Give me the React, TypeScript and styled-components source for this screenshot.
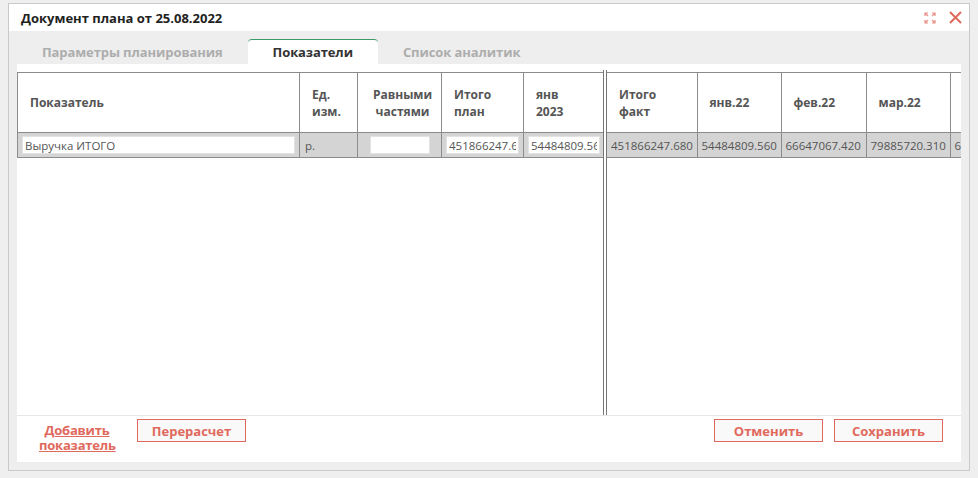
import styled, { createGlobalStyle, css } from "styled-components";

const ACCENT = "#e0695d";
const GRID = "#8c8c8c";
const TEXT = "#555";

const GlobalStyle = createGlobalStyle`
  html, body {
    margin: 0;
    padding: 0;
    background: #efefef;
    font-family: "Open Sans", "Liberation Sans", sans-serif;
  }
  * { box-sizing: border-box; }
`;

const Window = styled.div`
  margin: 3px 0 0 8px;
  width: 962px;
  height: 468px;
  border: 1px solid #c9c9c9;
  background: #eeeeee;
  display: flex;
  flex-direction: column;
`;

const Header = styled.div`
  height: 27px;
  background: #fff;
  display: flex;
  align-items: center;
  padding: 0 7px 0 12px;
`;

const Title = styled.div`
  flex: 1;
  font-size: 13px;
  font-weight: 700;
  color: #222;
`;

const HeaderIcons = styled.div`
  display: flex;
  align-items: center;
  gap: 13px;
`;

const Body = styled.div`
  flex: 1;
  display: flex;
  flex-direction: column;
  padding: 8px;
  min-height: 0;
`;

const Tabs = styled.div`
  display: flex;
  height: 25px;
`;

const Tab = styled.div<{ $active?: boolean }>`
  padding: 0 25px;
  line-height: 24px;
  font-size: 13px;
  font-weight: 700;
  letter-spacing: -0.1px;
  color: #adadad;
  border-top: 1px solid transparent;
  border-radius: 4px 4px 0 0;
  ${(p) =>
    p.$active &&
    css`
      background: #fff;
      color: #333;
      border-top-color: #3b9a66;
    `}
`;

const Panel = styled.div`
  flex: 1;
  background: #fff;
  display: flex;
  flex-direction: column;
  padding-top: 8px;
  min-height: 0;
`;

const GridArea = styled.div`
  flex: 1;
  display: flex;
  min-height: 0;
`;

const LeftPane = styled.div`
  width: 586px;
  flex: none;
`;

const Splitter = styled.div`
  width: 4px;
  flex: none;
  margin-top: -2px;
  border-left: 1px solid #777;
  border-right: 1px solid #777;
`;

const RightPane = styled.div`
  flex: 1;
  overflow: hidden;
`;

const Table = styled.table<{ $side: "left" | "right" }>`
  border-collapse: collapse;
  table-layout: fixed;
  width: ${(p) => (p.$side === "left" ? "586px" : "427px")};
  font-size: 11.5px;
  color: ${TEXT};

  th,
  td {
    border: 1px solid ${GRID};
    ${(p) =>
      p.$side === "left"
        ? css`
            &:last-child { border-right: none; }
          `
        : css`
            &:first-child { border-left: none; }
          `}
  }
`;

const HeadCell = styled.th<{ $center?: boolean }>`
  height: 60px;
  padding: 0 6px 0 12px;
  text-align: ${(p) => (p.$center ? "center" : "left")};
  font-weight: 700;
  font-size: 12px;
  line-height: 17px;
  color: ${TEXT};
  vertical-align: middle;
`;

const DataRow = styled.tr`
  background: #d4d4d4;
  height: 25px;
`;

const Cell = styled.td<{ $pad?: number }>`
  padding: 0 ${(p) => p.$pad ?? 4}px;
  white-space: nowrap;
  overflow: hidden;
  vertical-align: middle;
`;

const CellInput = styled.input<{ $w?: number }>`
  display: block;
  width: ${(p) => (p.$w ? `${p.$w}px` : "100%")};
  height: 18px;
  margin: 0 auto;
  padding: 0 2px;
  border: 1px solid #e2e2e2;
  background: #fff;
  font-family: inherit;
  font-size: 11.5px;
  color: ${TEXT};
  outline: none;
`;

const Footer = styled.div`
  height: 47px;
  flex: none;
  border-top: 1px solid #e6e6e6;
  display: flex;
  align-items: flex-start;
  padding: 3px 18px 0 22px;
`;

const AddLink = styled.a`
  margin-top: 4px;
  width: 76px;
  text-align: center;
  font-size: 13px;
  font-weight: 700;
  line-height: 15px;
  letter-spacing: -0.2px;
  color: ${ACCENT};
  text-decoration: underline;
  cursor: pointer;
`;

const Button = styled.button`
  width: 109px;
  height: 23px;
  border: 1px solid ${ACCENT};
  background: #f9f9f9;
  color: ${ACCENT};
  font-family: inherit;
  font-size: 13px;
  font-weight: 700;
  padding: 0;
  cursor: pointer;
`;

const Spacer = styled.div`
  flex: 1;
`;

const ButtonGroup = styled.div<{ $gap: number; $ml?: number }>`
  display: flex;
  gap: ${(p) => p.$gap}px;
  margin-left: ${(p) => p.$ml ?? 0}px;
`;

const MaximizeIcon = () => (
  <svg width="12" height="12" viewBox="0 0 12 12" fill="none" stroke="#e89088" strokeWidth="1.2">
    <path d="M1 4V1h3M1 1l3 3M8 1h3v3M11 1L8 4M1 8v3h3M1 11l3-3M11 8v3H8M11 11L8 8" />
  </svg>
);

const CloseIcon = () => (
  <svg width="13" height="13" viewBox="0 0 13 13" fill="none" stroke={ACCENT} strokeWidth="2">
    <path d="M1 1l11 11M12 1L1 12" />
  </svg>
);

const leftCols = [282, 58, 84, 82, 80];
const rightCols = [90, 84, 85, 84, 84];

const facts = ["451866247.680", "54484809.560", "66647067.420", "79885720.310", "61254390.870"];
const months = ["Итого факт", "янв.22", "фев.22", "мар.22", ""];

export default function App() {
  return (
    <>
      <GlobalStyle />
      <Window>
        <Header>
          <Title>Документ плана от 25.08.2022</Title>
          <HeaderIcons>
            <MaximizeIcon />
            <CloseIcon />
          </HeaderIcons>
        </Header>
        <Body>
          <Tabs>
            <Tab>Параметры планирования</Tab>
            <Tab $active>Показатели</Tab>
            <Tab>Список аналитик</Tab>
          </Tabs>
          <Panel>
            <GridArea>
              <LeftPane>
                <Table $side="left">
                  <colgroup>
                    {leftCols.map((w, i) => (
                      <col key={i} style={{ width: w }} />
                    ))}
                  </colgroup>
                  <thead>
                    <tr>
                      <HeadCell>Показатель</HeadCell>
                      <HeadCell>
                        Ед.
                        <br />
                        изм.
                      </HeadCell>
                      <HeadCell $center>
                        Равными
                        <br />
                        частями
                      </HeadCell>
                      <HeadCell>
                        Итого
                        <br />
                        план
                      </HeadCell>
                      <HeadCell>
                        янв
                        <br />
                        2023
                      </HeadCell>
                    </tr>
                  </thead>
                  <tbody>
                    <DataRow>
                      <Cell>
                        <CellInput defaultValue="Выручка ИТОГО" />
                      </Cell>
                      <Cell $pad={5}>р.</Cell>
                      <Cell>
                        <CellInput $w={60} defaultValue="" />
                      </Cell>
                      <Cell>
                        <CellInput defaultValue="451866247.680" />
                      </Cell>
                      <Cell>
                        <CellInput defaultValue="54484809.56" />
                      </Cell>
                    </DataRow>
                  </tbody>
                </Table>
              </LeftPane>
              <Splitter />
              <RightPane>
                <Table $side="right">
                  <colgroup>
                    {rightCols.map((w, i) => (
                      <col key={i} style={{ width: w }} />
                    ))}
                  </colgroup>
                  <thead>
                    <tr>
                      {months.map((m, i) => (
                        <HeadCell key={i}>
                          {i === 0 ? (
                            <>
                              Итого
                              <br />
                              факт
                            </>
                          ) : (
                            m
                          )}
                        </HeadCell>
                      ))}
                    </tr>
                  </thead>
                  <tbody>
                    <DataRow>
                      {facts.map((v) => (
                        <Cell key={v}>{v}</Cell>
                      ))}
                    </DataRow>
                  </tbody>
                </Table>
              </RightPane>
            </GridArea>
            <Footer>
              <AddLink>Добавить показатель</AddLink>
              <ButtonGroup $gap={11} $ml={22}>
                <Button>Перерасчет</Button>
              </ButtonGroup>
              <Spacer />
              <ButtonGroup $gap={11}>
                <Button>Отменить</Button>
                <Button>Сохранить</Button>
              </ButtonGroup>
            </Footer>
          </Panel>
        </Body>
      </Window>
    </>
  );
}
